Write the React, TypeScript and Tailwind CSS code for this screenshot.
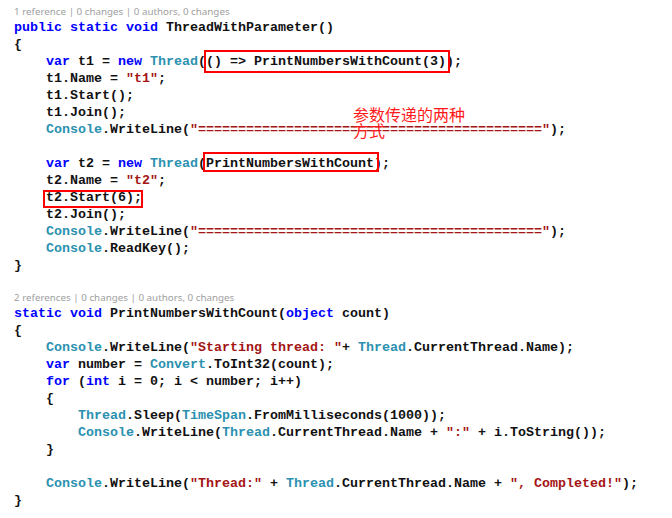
import React from "react";

type Seg = [string, string?];

const K = "text-[#0000ff]";
const T = "text-[#2b91af]";
const S = "text-[#a31515]";

const EQ = "=".repeat(43);

type Line = { kind: "code"; segs: Seg[] } | { kind: "lens"; text: string };

const code = (...segs: Seg[]): Line => ({ kind: "code", segs });
const lens = (text: string): Line => ({ kind: "lens", text });

const lines: Line[] = [
  lens("1 reference | 0 changes | 0 authors, 0 changes"),
  code(["public static void", K], [" ThreadWithParameter()"]),
  code(["{"]),
  code(["    "], ["var", K], [" t1 = "], ["new", K], [" "], ["Thread", T], ["(() => PrintNumbersWithCount(3));"]),
  code(["    t1.Name = "], ['"t1"', S], [";"]),
  code(["    t1.Start();"]),
  code(["    t1.Join();"]),
  code(["    "], ["Console", T], [".WriteLine("], ['"' + EQ + '"', S], [");"]),
  code([""]),
  code(["    "], ["var", K], [" t2 = "], ["new", K], [" "], ["Thread", T], ["(PrintNumbersWithCount);"]),
  code(["    t2.Name = "], ['"t2"', S], [";"]),
  code(["    t2.Start(6);"]),
  code(["    t2.Join();"]),
  code(["    "], ["Console", T], [".WriteLine("], ['"' + EQ + '"', S], [");"]),
  code(["    "], ["Console", T], [".ReadKey();"]),
  code(["}"]),
  code([""]),
  lens("2 references | 0 changes | 0 authors, 0 changes"),
  code(["static void", K], [" PrintNumbersWithCount("], ["object", K], [" count)"]),
  code(["{"]),
  code(["    "], ["Console", T], [".WriteLine("], ['"Starting thread: "', S], ["+ "], ["Thread", T], [".CurrentThread.Name);"]),
  code(["    "], ["var", K], [" number = "], ["Convert", T], [".ToInt32(count);"]),
  code(["    "], ["for", K], [" ("], ["int", K], [" i = 0; i < number; i++)"]),
  code(["    {"]),
  code(["        "], ["Thread", T], [".Sleep("], ["TimeSpan", T], [".FromMilliseconds(1000));"]),
  code(["        "], ["Console", T], [".WriteLine("], ["Thread", T], [".CurrentThread.Name + "], ['":"', S], [" + i.ToString());"]),
  code(["    }"]),
  code([""]),
  code(["    "], ["Console", T], [".WriteLine("], ['"Thread:"', S], [" + "], ["Thread", T], [".CurrentThread.Name + "], ['", Completed!"', S], [");"]),
  code(["}"]),
];

export default function App() {
  return (
    <div className="relative w-[672px] h-[518px] bg-white overflow-hidden">
      <div className="flex flex-col pt-[5px] pl-[14px]">
        {lines.map((l, i) =>
          l.kind === "lens" ? (
            <div
              key={i}
              className="h-[14px] leading-[14px] whitespace-pre font-['Noto_Sans',sans-serif] text-[9.8px] text-[#a0a0a0]"
            >
              {l.text}
            </div>
          ) : (
            <div
              key={i}
              className="h-[17px] leading-[17px] whitespace-pre font-['Liberation_Mono',monospace] text-[13.33px] font-bold text-[#111]"
            >
              {l.segs.map((s, j) => (
                <span key={j} className={s[1] ?? ""}>
                  {s[0]}
                </span>
              ))}
            </div>
          )
        )}
      </div>

      {/* annotation boxes drawn over the code */}
      <div className="absolute left-[204px] top-[50px] w-[246px] h-[23px] border-2 border-[#ff0000]" />
      <div className="absolute left-[203px] top-[152px] w-[176px] h-[20px] border-2 border-[#ff0000]" />
      <div className="absolute left-[43px] top-[190px] w-[100px] h-[18px] border-2 border-[#ff0000]" />

      <div className="absolute left-[353px] top-[106px] font-['Noto_Sans_CJK_SC',sans-serif] text-[16px] leading-[16px] text-[#ff1a1a]">
        参数传递的两种
        <br />
        方式
      </div>
    </div>
  );
}
